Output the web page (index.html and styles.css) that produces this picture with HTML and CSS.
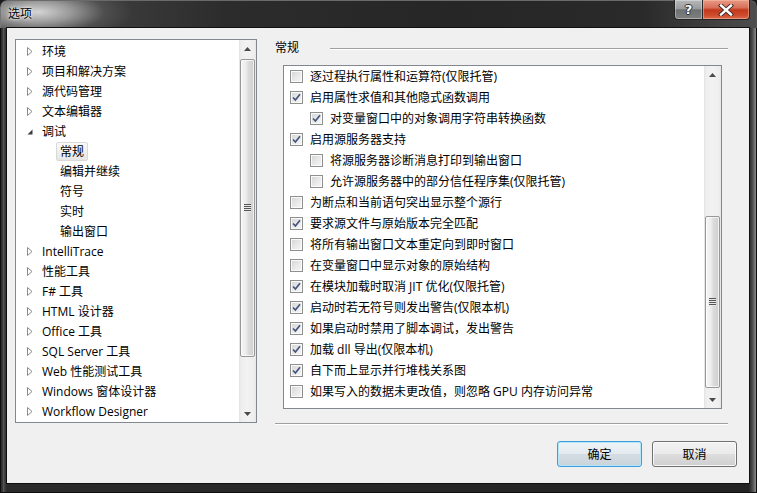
FILE: index.html
```html
<!DOCTYPE html>
<html lang="zh-CN">
<head>
<meta charset="utf-8">
<title>选项</title>
<link rel="stylesheet" href="styles.css">
</head>
<body>
<div class="window">
  <div class="titlebar">
    <span class="title">选项</span>
    <div class="caps">
      <div class="cap help"><span class="q">?</span></div>
      <div class="cap close">
        <svg width="16" height="12" viewBox="0 0 16 12"><path d="M3 1.5 L13 10.5 M13 1.5 L3 10.5" stroke="#3a2a26" stroke-width="4.2" stroke-linecap="square"/><path d="M3 1.5 L13 10.5 M13 1.5 L3 10.5" stroke="#fff" stroke-width="2.4" stroke-linecap="square"/></svg>
      </div>
    </div>
  </div>
  <div class="client">
    <div class="main">
      <div class="tree">
        <ul class="tree-list">
          <li class="node"><span class="exp"><svg width="6" height="9" viewBox="0 0 6 9"><path d="M0.5 0.5 L5 4.5 L0.5 8.5 Z" fill="#fff" stroke="#8a8a8a"/></svg></span><span class="lbl">环境</span></li>
          <li class="node"><span class="exp"><svg width="6" height="9" viewBox="0 0 6 9"><path d="M0.5 0.5 L5 4.5 L0.5 8.5 Z" fill="#fff" stroke="#8a8a8a"/></svg></span><span class="lbl">项目和解决方案</span></li>
          <li class="node"><span class="exp"><svg width="6" height="9" viewBox="0 0 6 9"><path d="M0.5 0.5 L5 4.5 L0.5 8.5 Z" fill="#fff" stroke="#8a8a8a"/></svg></span><span class="lbl">源代码管理</span></li>
          <li class="node"><span class="exp"><svg width="6" height="9" viewBox="0 0 6 9"><path d="M0.5 0.5 L5 4.5 L0.5 8.5 Z" fill="#fff" stroke="#8a8a8a"/></svg></span><span class="lbl">文本编辑器</span></li>
          <li class="node"><span class="exp"><svg width="6" height="9" viewBox="0 0 6 9"><path d="M5.5 2.5 L5.5 7.5 L0.5 7.5 Z" fill="#3c3c3c"/></svg></span><span class="lbl">调试</span></li>
          <li class="child sel"><span class="lbl">常规</span></li>
          <li class="child"><span class="lbl">编辑并继续</span></li>
          <li class="child"><span class="lbl">符号</span></li>
          <li class="child"><span class="lbl">实时</span></li>
          <li class="child"><span class="lbl">输出窗口</span></li>
          <li class="node"><span class="exp"><svg width="6" height="9" viewBox="0 0 6 9"><path d="M0.5 0.5 L5 4.5 L0.5 8.5 Z" fill="#fff" stroke="#8a8a8a"/></svg></span><span class="lbl">IntelliTrace</span></li>
          <li class="node"><span class="exp"><svg width="6" height="9" viewBox="0 0 6 9"><path d="M0.5 0.5 L5 4.5 L0.5 8.5 Z" fill="#fff" stroke="#8a8a8a"/></svg></span><span class="lbl">性能工具</span></li>
          <li class="node"><span class="exp"><svg width="6" height="9" viewBox="0 0 6 9"><path d="M0.5 0.5 L5 4.5 L0.5 8.5 Z" fill="#fff" stroke="#8a8a8a"/></svg></span><span class="lbl">F# 工具</span></li>
          <li class="node"><span class="exp"><svg width="6" height="9" viewBox="0 0 6 9"><path d="M0.5 0.5 L5 4.5 L0.5 8.5 Z" fill="#fff" stroke="#8a8a8a"/></svg></span><span class="lbl">HTML 设计器</span></li>
          <li class="node"><span class="exp"><svg width="6" height="9" viewBox="0 0 6 9"><path d="M0.5 0.5 L5 4.5 L0.5 8.5 Z" fill="#fff" stroke="#8a8a8a"/></svg></span><span class="lbl">Office 工具</span></li>
          <li class="node"><span class="exp"><svg width="6" height="9" viewBox="0 0 6 9"><path d="M0.5 0.5 L5 4.5 L0.5 8.5 Z" fill="#fff" stroke="#8a8a8a"/></svg></span><span class="lbl">SQL Server 工具</span></li>
          <li class="node"><span class="exp"><svg width="6" height="9" viewBox="0 0 6 9"><path d="M0.5 0.5 L5 4.5 L0.5 8.5 Z" fill="#fff" stroke="#8a8a8a"/></svg></span><span class="lbl">Web 性能测试工具</span></li>
          <li class="node"><span class="exp"><svg width="6" height="9" viewBox="0 0 6 9"><path d="M0.5 0.5 L5 4.5 L0.5 8.5 Z" fill="#fff" stroke="#8a8a8a"/></svg></span><span class="lbl">Windows 窗体设计器</span></li>
          <li class="node"><span class="exp"><svg width="6" height="9" viewBox="0 0 6 9"><path d="M0.5 0.5 L5 4.5 L0.5 8.5 Z" fill="#fff" stroke="#8a8a8a"/></svg></span><span class="lbl">Workflow Designer</span></li>
        </ul>
        <div class="vscroll">
          <div class="sb-btn"><svg width="7" height="4" viewBox="0 0 7 4"><path d="M0 4 L3.5 0 L7 4 Z" fill="#4a4a4a"/></svg></div>
          <div class="sb-track">
            <div class="thumb thumb-tree"><div class="grip"></div></div>
          </div>
          <div class="sb-btn"><svg width="7" height="4" viewBox="0 0 7 4"><path d="M0 0 L7 0 L3.5 4 Z" fill="#4a4a4a"/></svg></div>
        </div>
      </div>
      <div class="pane">
        <div class="pane-head"><span class="head-text">常规</span><div class="rule"></div></div>
        <div class="list">
          <div class="checks">
            <div class="chk"><span class="box"></span><span>逐过程执行属性和运算符(仅限托管)</span></div>
            <div class="chk"><span class="box"><svg width="11" height="11" viewBox="0 0 11 11"><path d="M2 5.5 L4.4 8 L9 2.2" fill="none" stroke="#44567e" stroke-width="1.7"/></svg></span><span>启用属性求值和其他隐式函数调用</span></div>
            <div class="chk ind"><span class="box"><svg width="11" height="11" viewBox="0 0 11 11"><path d="M2 5.5 L4.4 8 L9 2.2" fill="none" stroke="#44567e" stroke-width="1.7"/></svg></span><span>对变量窗口中的对象调用字符串转换函数</span></div>
            <div class="chk"><span class="box"><svg width="11" height="11" viewBox="0 0 11 11"><path d="M2 5.5 L4.4 8 L9 2.2" fill="none" stroke="#44567e" stroke-width="1.7"/></svg></span><span>启用源服务器支持</span></div>
            <div class="chk ind"><span class="box"></span><span>将源服务器诊断消息打印到输出窗口</span></div>
            <div class="chk ind"><span class="box"></span><span>允许源服务器中的部分信任程序集(仅限托管)</span></div>
            <div class="chk"><span class="box"></span><span>为断点和当前语句突出显示整个源行</span></div>
            <div class="chk"><span class="box"><svg width="11" height="11" viewBox="0 0 11 11"><path d="M2 5.5 L4.4 8 L9 2.2" fill="none" stroke="#44567e" stroke-width="1.7"/></svg></span><span>要求源文件与原始版本完全匹配</span></div>
            <div class="chk"><span class="box"></span><span>将所有输出窗口文本重定向到即时窗口</span></div>
            <div class="chk"><span class="box"></span><span>在变量窗口中显示对象的原始结构</span></div>
            <div class="chk"><span class="box"><svg width="11" height="11" viewBox="0 0 11 11"><path d="M2 5.5 L4.4 8 L9 2.2" fill="none" stroke="#44567e" stroke-width="1.7"/></svg></span><span>在模块加载时取消 JIT 优化(仅限托管)</span></div>
            <div class="chk"><span class="box"><svg width="11" height="11" viewBox="0 0 11 11"><path d="M2 5.5 L4.4 8 L9 2.2" fill="none" stroke="#44567e" stroke-width="1.7"/></svg></span><span>启动时若无符号则发出警告(仅限本机)</span></div>
            <div class="chk"><span class="box"><svg width="11" height="11" viewBox="0 0 11 11"><path d="M2 5.5 L4.4 8 L9 2.2" fill="none" stroke="#44567e" stroke-width="1.7"/></svg></span><span>如果启动时禁用了脚本调试，发出警告</span></div>
            <div class="chk"><span class="box"><svg width="11" height="11" viewBox="0 0 11 11"><path d="M2 5.5 L4.4 8 L9 2.2" fill="none" stroke="#44567e" stroke-width="1.7"/></svg></span><span>加载 dll 导出(仅限本机)</span></div>
            <div class="chk"><span class="box"><svg width="11" height="11" viewBox="0 0 11 11"><path d="M2 5.5 L4.4 8 L9 2.2" fill="none" stroke="#44567e" stroke-width="1.7"/></svg></span><span>自下而上显示并行堆栈关系图</span></div>
            <div class="chk"><span class="box"></span><span>如果写入的数据未更改值，则忽略 GPU 内存访问异常</span></div>
          </div>
          <div class="vscroll">
            <div class="sb-btn"><svg width="7" height="4" viewBox="0 0 7 4"><path d="M0 4 L3.5 0 L7 4 Z" fill="#4a4a4a"/></svg></div>
            <div class="sb-track">
              <div class="thumb thumb-list"><div class="grip"></div></div>
            </div>
            <div class="sb-btn"><svg width="7" height="4" viewBox="0 0 7 4"><path d="M0 0 L7 0 L3.5 4 Z" fill="#4a4a4a"/></svg></div>
          </div>
        </div>
        <div class="sep"></div>
      </div>
    </div>
    <div class="buttons">
      <button class="btn default">确定</button>
      <button class="btn">取消</button>
    </div>
  </div>
</div>
</body>
</html>
```
FILE: styles.css
```css
html, body {
  margin: 0;
  padding: 0;
  background: #1c1c1c;
}
body {
  width: 757px;
  height: 493px;
  overflow: hidden;
  font-family: "Open Sans", "Noto Sans CJK SC", sans-serif;
  font-size: 12px;
  color: #000;
}
.window {
  width: 757px;
  height: 493px;
  box-sizing: border-box;
  display: flex;
  flex-direction: column;
  border-radius: 7px 7px 0 0;
  background:
    linear-gradient(to right, #7a7a7a 0, #151515 2px, #5e5e5e 3px, #3a3a3a 5px, #2a2a2a 7px, #232323 calc(100% - 8px), #555 calc(100% - 4px), #8a8a8a calc(100% - 1px), #202020 100%);
  box-shadow: inset 0 0 0 1px #0e0e0e;
  overflow: hidden;
}
.titlebar {
  height: 28px;
  display: flex;
  justify-content: space-between;
  align-items: flex-start;
  background:
    radial-gradient(ellipse 95px 30px at 38px 12px, rgba(220,220,220,0.95) 0, rgba(190,190,190,0.7) 35%, rgba(120,120,120,0.3) 70%, rgba(0,0,0,0) 100%),
    linear-gradient(to right, #4a4a4a 0, #2c2c2c 30%, #262626 60%, #2a2a2a 85%, #4e4e4e 100%);
  border-radius: 7px 7px 0 0;
  box-shadow: inset 0 1px 0 #6a6a6a, inset 1px 0 0 #777, inset -1px 0 0 #555;
}
.title {
  padding: 6px 0 0 8px;
  line-height: 16px;
  color: #000;
  text-shadow: 0 0 4px #fff, 0 0 2px #fff;
}
.caps {
  display: flex;
  margin-right: 7px;
}
.cap {
  height: 20px;
  box-sizing: border-box;
  display: flex;
  align-items: center;
  justify-content: center;
  border: 1px solid #262626;
  border-top: 0;
}
.help {
  width: 28px;
  border-right: 0;
  border-radius: 0 0 0 4px;
  background: linear-gradient(#b6b8ba 0, #9a9c9e 45%, #6e7072 52%, #7e8082 100%);
  box-shadow: inset 0 0 0 1px rgba(255,255,255,0.35);
}
.q {
  color: #fff;
  font-family: "DejaVu Sans", sans-serif;
  font-weight: bold;
  font-size: 13px;
  line-height: 14px;
  text-shadow: 0 0 1px #222, 1px 0 0 #333, -1px 0 0 #333, 0 1px 0 #333, 0 -1px 0 #333;
}
.close {
  width: 48px;
  border-radius: 0 0 4px 0;
  background: linear-gradient(#e89a86 0, #d8705a 40%, #c2391c 52%, #cd4b2d 80%, #dc6a4c 100%);
  box-shadow: inset 0 0 0 1px rgba(255,200,180,0.45);
}
.client {
  height: 455px;
  margin: 0 8px 0 7px;
  background: #f0f0f0;
  box-shadow: 0 0 0 1px #101010;
  display: flex;
  flex-direction: column;
}
.main {
  display: flex;
  margin: 11px 0 0 8px;
  height: 384px;
}
.tree {
  width: 242px;
  height: 384px;
  box-sizing: border-box;
  border: 1px solid #828790;
  background: #fff;
  display: flex;
}
.tree-list {
  flex: 1;
  list-style: none;
  margin: 0;
  padding: 1px 0 0;
}
.tree-list li {
  height: 20px;
  display: flex;
  align-items: center;
  white-space: nowrap;
}
.node {
  padding-left: 11px;
}
.exp {
  width: 15px;
  display: flex;
  align-items: center;
}
.exp svg {
  display: block;
}
.lbl {
  line-height: 17px;
}
.child {
  padding-left: 40px;
}
.child .lbl {
  padding: 0 3px;
  border: 1px solid transparent;
  border-radius: 2px;
}
.child.sel .lbl {
  border-color: #d9d9d9;
  background: linear-gradient(#fafafa, #e6e6e6);
}
.vscroll {
  width: 17px;
  flex: none;
  display: flex;
  flex-direction: column;
  background: linear-gradient(to right, #e2e2e2 0, #eeeeee 2px, #f2f2f2 50%, #eeeeee calc(100% - 2px), #e6e6e6 100%);
}
.sb-btn {
  height: 17px;
  flex: none;
  display: flex;
  align-items: center;
  justify-content: center;
}
.sb-btn svg {
  display: block;
}
.sb-track {
  flex: 1;
  display: flex;
  flex-direction: column;
}
.thumb {
  box-sizing: border-box;
  margin: 0 1px;
  border: 1px solid #979797;
  border-radius: 2px;
  background: linear-gradient(to right, #f6f6f6 0, #ececec 40%, #dcdcdc 55%, #cfcfcf 100%);
  box-shadow: inset 0 0 0 1px rgba(255,255,255,0.7);
  display: flex;
  align-items: center;
  justify-content: center;
}
.thumb-tree {
  margin-top: 2px;
  height: 298px;
}
.thumb-list {
  margin-top: 133px;
  height: 172px;
}
.grip {
  width: 7px;
  height: 8px;
  background: repeating-linear-gradient(to bottom, #555 0, #555 1px, #eaeaea 1px, #eaeaea 2px);
}
.pane {
  margin-left: 18px;
  width: 453px;
  display: flex;
  flex-direction: column;
}
.pane-head {
  height: 26px;
  flex: none;
  display: flex;
  align-items: flex-start;
}
.head-text {
  width: 55px;
  line-height: 16px;
  margin-top: 1px;
}
.rule {
  flex: 1;
  margin-top: 9px;
  border-top: 1px solid #a0a0a0;
  border-bottom: 1px solid #fff;
}
.list {
  margin-left: 8px;
  width: 439px;
  height: 344px;
  flex: none;
  box-sizing: border-box;
  border: 1px solid #828790;
  background: #fff;
  display: flex;
}
.checks {
  flex: 1;
}
.chk {
  height: 21px;
  display: flex;
  align-items: center;
  padding-left: 6px;
  white-space: nowrap;
  line-height: 16px;
}
.chk.ind {
  padding-left: 26px;
}
.box {
  width: 13px;
  height: 13px;
  flex: none;
  box-sizing: border-box;
  margin-right: 7px;
  border: 1px solid #8e8f8f;
  background: linear-gradient(135deg, #d4d4d4 0, #e6e6e6 45%, #f8f8f8 100%);
  box-shadow: inset 0 0 0 1px #fafafa;
  display: flex;
  align-items: center;
  justify-content: center;
}
.box svg {
  display: block;
}
.sep {
  margin-top: 14px;
  border-top: 1px solid #a0a0a0;
  border-bottom: 1px solid #fff;
}
.buttons {
  display: flex;
  justify-content: flex-end;
  gap: 10px;
  margin-top: 18px;
  padding-right: 12px;
}
.btn {
  width: 85px;
  height: 26px;
  box-sizing: border-box;
  border: 1px solid #707070;
  border-radius: 3px;
  background: linear-gradient(#f2f2f2 0, #ebebeb 48%, #dddddd 52%, #cfcfcf 100%);
  box-shadow: inset 0 0 0 1px rgba(255,255,255,0.8);
  font: inherit;
  color: #000;
  padding: 0;
  display: flex;
  align-items: center;
  justify-content: center;
}
.btn.default {
  border-color: #3c9ed8;
  background: linear-gradient(#eaf6fd 0, #d9f0fc 48%, #bee6fd 52%, #a7d9f5 100%);
  background: linear-gradient(#eef3f6 0, #e4ebef 48%, #d4dde3 52%, #c9d3da 100%);
  box-shadow: inset 0 0 0 1px #b6e6fb;
}
```
